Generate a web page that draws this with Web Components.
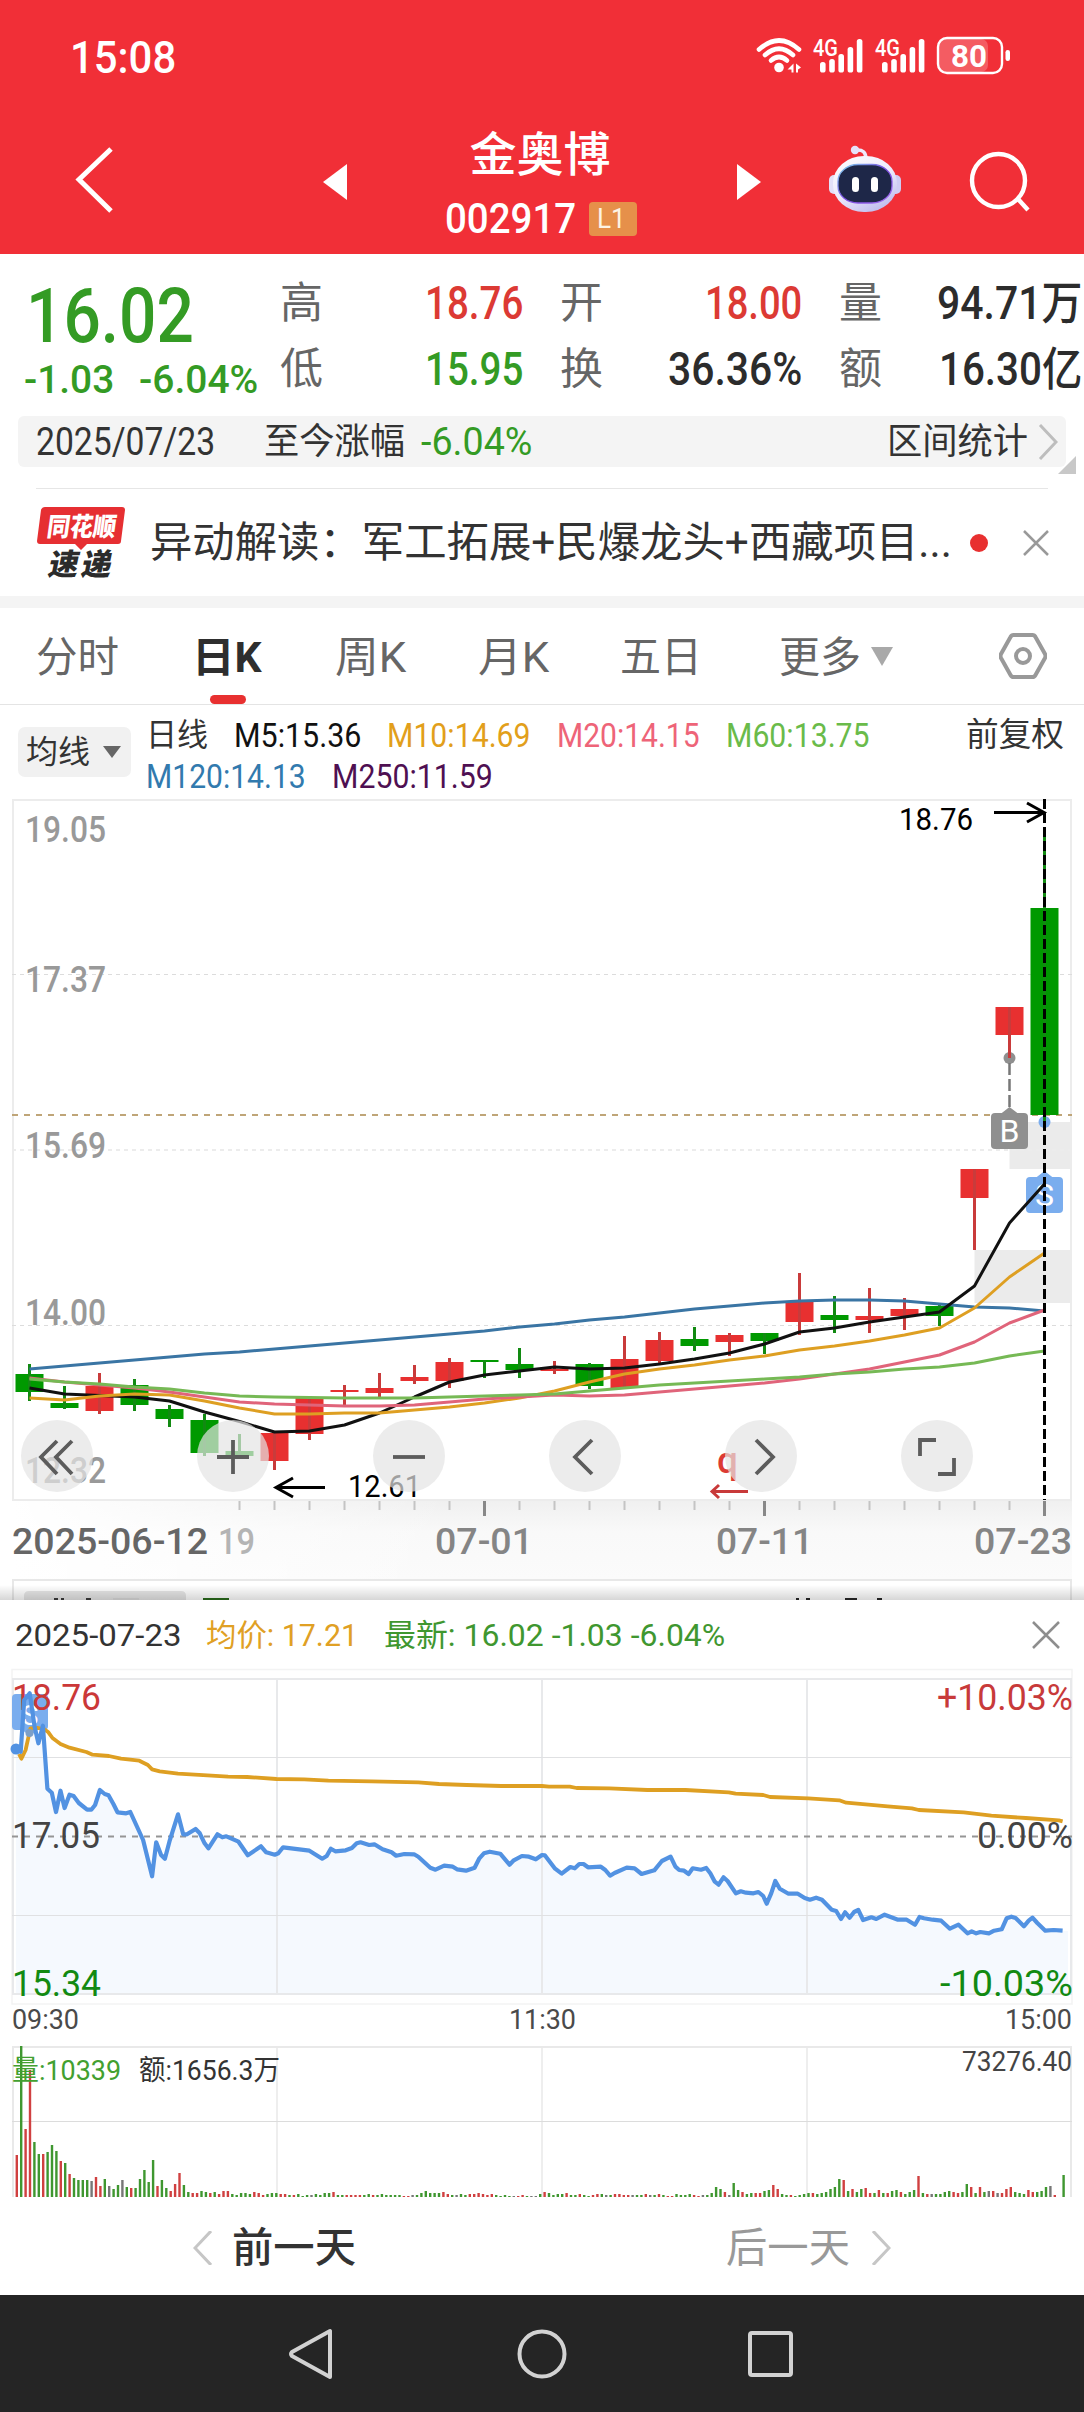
<!DOCTYPE html>
<html lang="zh-CN">
<head>
<meta charset="utf-8">
<title>金奥博 002917</title>
<style>
    body {
        margin: 0;
        width: 1084px;
        background: #fff;
        color: #333;
        font-family: Roboto, "Noto Sans CJK SC", sans-serif;
        --up: #e83030;
        --down: #349b24;
    }
</style>
</head>
<body>
<stock-app></stock-app>

<script>
const NS = 'font-family="Roboto, Noto Sans CJK SC, sans-serif"'

// one line of text squeezed or stretched to an exact width
class FitText extends HTMLElement {
    connectedCallback() {
        const size = this.getAttribute("size")
        const w = Number(this.getAttribute("w"))
        const root = this.attachShadow({ mode: "open" })
        root.innerHTML = `<style>
            :host {
                display: block;
                flex: none;
                width: ${w}px;
                height: ${size}px;
                font-size: ${size}px;
                font-weight: ${this.getAttribute("weight") || 400};
                color: ${this.getAttribute("color") || "inherit"};
                line-height: 1;
                white-space: pre;
            }
            span { display: inline-block; transform-origin: 0 0; }
        </style><span><slot></slot></span>`
        const span = root.querySelector("span")
        const natural = span.offsetWidth
        if (natural > 0) { span.style.transform = `translateX(-1px) scaleX(${w / natural})` }
    }
}

class StatusBar extends HTMLElement {
    connectedCallback() {
        this.attachShadow({ mode: "open" }).innerHTML = this.render()
    }

    renderSignal(x) {
        const bars = [[0, 62], [9.2, 59], [18.4, 54], [27.6, 47], [36.8, 39]]
            .map(([dx, y]) => `<rect x="${x + dx}" y="${y}" width="5.6" height="${72.5 - y}" rx="2.6"/>`)
        return `<text x="${x - 7}" y="56" font-size="24" font-weight="500" textLength="25" lengthAdjust="spacingAndGlyphs" ${NS}>4G</text>${bars.join("")}`
    }

    render() {
        return `<style>
            :host {
                display: flex;
                justify-content: space-between;
                align-items: flex-start;
                height: 114px;
                padding: 35px 71px 0 71px;
                box-sizing: border-box;
                color: #fff;
            }
        </style>
        <fit-text w="106" size="45" weight="500">15:08</fit-text>
        <svg width="258" height="40" viewBox="755 35 258 40" fill="#fff">
            <g fill="none" stroke="#fff" stroke-width="4.6" stroke-linecap="round">
                <path d="M759 49.500Q779 31.500 799 49.500"/>
                <path d="M765 55Q779 42.500 793 55"/>
                <path d="M771 60.500Q779 53.500 787 60.500"/>
            </g>
            <circle cx="779" cy="67.500" r="4.800"/>
            <path d="M793.500 63.500v9h-2v-3h-4zM796 63.500l5 4-3 2v3h-2z"/>
            ${this.renderSignal(820)}
            ${this.renderSignal(882)}
            <rect x="939" y="39" width="49" height="33" rx="7" fill="#fff" fill-opacity=".22"/>
            <rect x="938" y="38" width="64" height="35" rx="9" fill="none" stroke="#fff" stroke-width="2.400"/>
            <rect x="1005.500" y="50" width="4.500" height="11" rx="2.200"/>
            <text x="951" y="67" font-size="32" font-weight="700" textLength="36" lengthAdjust="spacingAndGlyphs" ${NS}>80</text>
        </svg>`
    }
}

class StockHeader extends HTMLElement {
    connectedCallback() {
        this.attachShadow({ mode: "open" }).innerHTML = `<style>
            :host {
                display: grid;
                grid-template-columns: 323px 25px 389px 25px 67px 72px 1fr;
                height: 140px;
                color: #fff;
            }
            svg { display: block; }
            .back { margin: 33px 0 0 74px; }
            .arrow { margin-top: 50px; }
            .name { display: flex; flex-direction: column; align-items: center; padding: 17px 3px 0 0; }
            .code { display: flex; align-items: center; gap: 12px; margin-top: 20px; }
            .level {
                display: flex;
                justify-content: center;
                align-items: center;
                width: 48px;
                height: 34px;
                border-radius: 4px;
                background: #e6904a;
                color: #fdf3e4;
            }
            .robot { grid-column: 6; margin-top: 31px; }
            .search { margin: 36px 0 0 67px; }
        </style>
        <svg class="back" width="42" height="66" viewBox="0 0 42 66" fill="none" stroke="#fff" stroke-width="5"><path d="M37 2 5 32.500 37 64"/></svg>
        <svg class="arrow" width="24" height="36" fill="#fff"><path d="M24 0v36L0 18z"/></svg>
        <div class="name">
            <fit-text w="141" size="47" weight="500"><slot name="name"></slot></fit-text>
            <div class="code">
                <fit-text w="131" size="42" weight="500"><slot name="code"></slot></fit-text>
                <div class="level"><fit-text w="29" size="27">L1</fit-text></div>
            </div>
        </div>
        <svg class="arrow" width="24" height="36" fill="#fff"><path d="M0 0v36l24-18z"/></svg>
        <svg class="robot" width="73" height="68" viewBox="829 145 73 68">
            <defs>
                <linearGradient id="shell" x2=".6" y2="1"><stop offset="0" stop-color="#fff"/><stop offset=".6" stop-color="#ece9fb"/><stop offset="1" stop-color="#c3c0ef"/></linearGradient>
                <linearGradient id="rim" x2="1" y2="1"><stop offset="0" stop-color="#7fd6ee"/><stop offset=".5" stop-color="#7a4be0"/><stop offset="1" stop-color="#a26bf0"/></linearGradient>
            </defs>
            <path d="M856 150q10-1 10 9" fill="none" stroke="#eeeafc" stroke-width="3.500"/>
            <circle cx="855" cy="150" r="4.200" fill="#e6e2fa"/>
            <rect x="829" y="175" width="12" height="19" rx="5" fill="#e3e0f8"/>
            <rect x="889" y="175" width="12" height="19" rx="5" fill="#cfccf3"/>
            <rect x="833" y="156" width="64" height="56" rx="31" ry="27" fill="url(#shell)"/>
            <rect x="838" y="164.500" width="54" height="38.500" rx="20" ry="17" fill="#1e2748" stroke="url(#rim)" stroke-width="1.300"/>
            <rect x="852" y="177" width="7" height="15" rx="3.500" fill="#fff"/>
            <rect x="871" y="177" width="7" height="15" rx="3.500" fill="#fff"/>
        </svg>
        <svg class="search" width="64" height="64" viewBox="968 150 64 64" fill="none" stroke="#fff" stroke-width="4.400"><circle cx="998.500" cy="180.500" r="26.500"/><path d="m1018 199 10 11"/></svg>`
    }
}

class QuotePanel extends HTMLElement {
    connectedCallback() {
        this.attachShadow({ mode: "open" }).innerHTML = this.render()
    }

    render() {
        const red = "#dc3a34"
        const green = "#349b24"
        const cells = [
            ["高", "18.76", 98, red], ["开", "18.00", 97, red], ["量", "94.71万", 145, "#2c2c2c"],
            ["低", "15.95", 98, green], ["换", "36.36%", 134, "#2c2c2c"], ["额", "16.30亿", 143, "#2c2c2c"],
        ].map(([label, value, w, color]) => `<div class="cell">
            <fit-text w="43" size="43" color="#666">${label}</fit-text>
            <fit-text w="${w}" size="46" weight="500" color="${color}">${value}</fit-text>
        </div>`)
        return `<style>
            :host { display: flex; height: 162px; color: #349b24; }
            .price { width: 281px; padding: 24px 0 0 27px; box-sizing: border-box; flex: none; }
            .change { display: flex; gap: 25px; margin: 7px 0 0 -2px; }
            .grid {
                display: grid;
                grid-template-columns: 243px 242px 243px;
                grid-auto-rows: 66px;
                column-gap: 37px;
                padding-top: 16px;
                align-items: center;
            }
            .cell { display: flex; justify-content: space-between; align-items: center; }
        </style>
        <div class="price">
            <fit-text w="168" size="76" weight="500">16.02</fit-text>
            <div class="change">
                <fit-text w="90" size="38" weight="500">-1.03</fit-text>
                <fit-text w="119" size="38" weight="500">-6.04%</fit-text>
            </div>
        </div>
        <div class="grid">${cells.join("")}</div>`
    }
}

class IntervalBar extends HTMLElement {
    connectedCallback() {
        this.attachShadow({ mode: "open" }).innerHTML = `<style>
            :host { display: block; height: 73px; position: relative; }
            .bar {
                display: flex;
                align-items: center;
                height: 51px;
                margin: 0 18px;
                padding: 0 8px 0 19px;
                border-radius: 6px;
                background: #f4f4f4;
            }
            .since { margin: 0 16px 0 49px; }
            .stat { margin-left: auto; }
            .chevron { margin-left: 9px; }
            .corner { position: absolute; left: 1058px; top: 40px; }
            hr { margin: 21px 36px 0; border: 0; border-top: 1px solid #e6e6e6; }
        </style>
        <div class="bar">
            <fit-text w="179" size="38">2025/07/23</fit-text>
            <fit-text class="since" w="141" size="36">至今涨幅</fit-text>
            <fit-text w="111" size="38" color="#349b24">-6.04%</fit-text>
            <fit-text class="stat" w="141" size="36">区间统计</fit-text>
            <svg class="chevron" width="20" height="36" fill="none" stroke="#bdbdbd" stroke-width="3"><path d="m2 1 16 17L2 35"/></svg>
        </div>
        <svg class="corner" width="18" height="18" fill="#c8c8c8"><path d="M18 0v18H0z"/></svg>
        <hr>`
    }
}

class NewsTicker extends HTMLElement {
    connectedCallback() {
        this.attachShadow({ mode: "open" }).innerHTML = `<style>
            :host {
                display: flex;
                align-items: center;
                height: 107px;
                border-bottom: 12px solid #f4f4f4;
            }
            .logo { margin: 0 25px 0 37px; }
            .dot { width: 18px; height: 18px; border-radius: 50%; background: var(--up); margin: 0 35px 0 17px; }
        </style>
        <svg class="logo" width="89" height="76" viewBox="37 504 89 76" ${NS} font-weight="900">
            <path d="M45 506h77q3 0 3 3l-4 31q0 3-3 3H87l-6 6-6-6H40q-3 0-3-3l4-31q1-3 4-3z" fill="#e62f32"/>
            <text transform="translate(46 535) skewX(-8)" font-size="26" fill="#fff" textLength="69" lengthAdjust="spacingAndGlyphs">同花顺</text>
            <text transform="translate(47 574) skewX(-12)" font-size="30" fill="#2b2b2b" textLength="63">速递</text>
        </svg>
        <fit-text w="802" size="42"><slot></slot></fit-text>
        <div class="dot"></div>
        <svg width="26" height="26" fill="none" stroke="#999" stroke-width="2.500"><path d="m1 1 24 24M25 1 1 25"/></svg>`
    }
}

class PeriodTabs extends HTMLElement {
    connectedCallback() {
        const tabs = [
            ["分时", 83], ["日K", 70, true], ["周K", 71], ["月K", 71], ["五日", 82], ["更多", 82],
        ].map(([label, w, active]) => `<div class="tab${active ? " active" : ""}">
            <fit-text w="${w}" size="42" ${active ? 'weight="700"' : ""}>${label}</fit-text>
        </div>`)
        this.attachShadow({ mode: "open" }).innerHTML = `<style>
            :host {
                display: flex;
                height: 96px;
                padding-left: 37px;
                border-bottom: 1px solid #e4e4e4;
                box-sizing: content-box;
                color: #666;
            }
            .tab {
                display: flex;
                flex-direction: column;
                align-items: center;
                padding-top: 29px;
                margin-right: 73px;
            }
            .tab:nth-of-type(3) { margin-right: 72px; }
            .tab:nth-of-type(4) { margin-right: 71px; }
            .tab:nth-of-type(5) { margin-right: 77px; }
            .tab:nth-of-type(6) { margin-right: 9px; }
            .active { color: #2e2e2e; }
            .active::after { content: ""; width: 36px; height: 9px; border-radius: 5px; background: var(--up); margin-top: 16px; }
            .gear { margin: 24px 0 0 106px; }
            .caret { margin-top: 39px; }
        </style>
        ${tabs.join("")}
        <svg class="caret" width="22" height="19" fill="#a9a9a9"><path d="M0 0h22L11 19z"/></svg>
        <svg class="gear" width="48" height="48" viewBox="0 0 48 48" fill="none" stroke="#999" stroke-width="4"><path d="M14.500 3h19q2 0 3 2l9.500 17q1 2 0 4l-9.500 17q-1 2-3 2h-19q-2 0-3-2L2 26q-1-2 0-4l9.500-17q1-2 3-2z"/><circle cx="24" cy="24" r="7"/></svg>`
    }
}

class MaLegend extends HTMLElement {
    connectedCallback() {
        this.attachShadow({ mode: "open" }).innerHTML = `<style>
            :host { display: flex; height: 93px; }
            button {
                display: flex;
                align-items: center;
                gap: 12px;
                width: 113px;
                height: 50px;
                margin: 22px 16px 0 18px;
                padding: 0 0 0 9px;
                border: 0;
                border-radius: 7px;
                background: #f1f1f1;
                font-family: inherit;
                color: #333;
            }
            .rows { display: grid; grid-auto-rows: 41px; padding-top: 9px; align-items: center; align-content: start; }
            .row { display: flex; gap: 26px; align-items: center; }
            .adjust { margin: 13px 19px 0 auto; }
        </style>
        <button><fit-text w="64" size="32">均线</fit-text><svg width="18" height="12" fill="#666"><path d="M0 0h18L9 12z"/></svg></button>
        <div class="rows">
            <div class="row">
                <fit-text w="62" size="32">日线</fit-text>
                <fit-text w="127" size="34" color="#111">M5:15.36</fit-text>
                <fit-text w="144" size="34" color="#e29f1b">M10:14.69</fit-text>
                <fit-text w="143" size="34" color="#ee6478">M20:14.15</fit-text>
                <fit-text w="144" size="34" color="#6abb4a">M60:13.75</fit-text>
            </div>
            <div class="row">
                <fit-text w="160" size="34" color="#327aae">M120:14.13</fit-text>
                <fit-text w="161" size="34" color="#4f1052">M250:11.59</fit-text>
            </div>
        </div>
        <fit-text class="adjust" w="98" size="33">前复权</fit-text>`
    }
}

// [colour, body top, body bottom, high, low] for each trading day
const candles = [
    ["g", 1374, 1392, 1364, 1401], ["g", 1403, 1408, 1386, 1409], ["r", 1386, 1411, 1373, 1414],
    ["g", 1385, 1405, 1379, 1411], ["g", 1409, 1419, 1405, 1427], ["g", 1420, 1453, 1414, 1456],
    ["g", 1451, 1456, 1434, 1458], ["r", 1433, 1461, 1433, 1470], ["r", 1398, 1434, 1398, 1440],
    ["r", 1390, 1392, 1385, 1405], ["r", 1388, 1393, 1373, 1397], ["r", 1377, 1381, 1365, 1384],
    ["r", 1362, 1381, 1358, 1388], ["g", 1360, 1362, 1360, 1378], ["g", 1364, 1370, 1348, 1378],
    ["r", 1369, 1371, 1361, 1374], ["g", 1364, 1386, 1363, 1389], ["r", 1359, 1388, 1336, 1388],
    ["r", 1340, 1361, 1332, 1363], ["g", 1339, 1346, 1327, 1351], ["r", 1335, 1342, 1333, 1356],
    ["g", 1333, 1341, 1333, 1354], ["r", 1301, 1322, 1273, 1335], ["g", 1315, 1320, 1296, 1333],
    ["r", 1316, 1320, 1288, 1333], ["r", 1309, 1316, 1298, 1330], ["g", 1306, 1316, 1304, 1326],
    ["r", 1169, 1198, 1169, 1250], ["r", 1007, 1035, 1007, 1058], ["g", 908, 1115, 835, 1122],
]

const averages = {
    "#3a75a4": [1369, 1366, 1363, 1360, 1357, 1354, 1352, 1349, 1346, 1343, 1340, 1337, 1334, 1331, 1327, 1324, 1320, 1317, 1313, 1309, 1306, 1303, 1301, 1300, 1300, 1301, 1304, 1307, 1308, 1311],
    "#111": [1388, 1394, 1395.5, 1397, 1401, 1412, 1421.5, 1432, 1431, 1425, 1413, 1397, 1382, 1375, 1371, 1367, 1369, 1368, 1364, 1359, 1353, 1344, 1332, 1328, 1322, 1317, 1312, 1286, 1223, 1184],
    "#de9f22": [1398, 1400, 1396, 1394, 1395, 1401, 1408, 1414, 1414, 1413, 1413, 1410, 1407, 1403, 1398, 1391, 1382, 1374, 1369, 1365, 1360, 1356, 1350, 1346, 1341, 1335, 1328, 1308, 1277, 1253],
    "#e0647a": [1378, 1382, 1385, 1388, 1392, 1397, 1402, 1404, 1405, 1406, 1406, 1405, 1402, 1399, 1397, 1395, 1396, 1395, 1392, 1389, 1386, 1383, 1379, 1374, 1369, 1362, 1355, 1342, 1323, 1310],
    "#76b955": [1379, 1382, 1384, 1387, 1389, 1393, 1396, 1397, 1397.5, 1398, 1398, 1398, 1397, 1396, 1395, 1394, 1391, 1388, 1385, 1383, 1381, 1379, 1377, 1374, 1372, 1369, 1367, 1363, 1356, 1351],
}

const label = (x, y, w, size, fill, text, extra = "") =>
    `<text x="${x}" y="${y}" font-size="${size}" fill="${fill}" textLength="${w}" lengthAdjust="spacingAndGlyphs" ${extra}>${text}</text>`

class CandleChart extends HTMLElement {
    connectedCallback() {
        this.attachShadow({ mode: "open" }).innerHTML = this.render()
    }

    x(i) {
        return 29.5 + i * 35
    }

    renderCandle([color, top, bottom, high, low], i) {
        const fill = color === "r" ? "#e83030" : "#009900"
        return `<rect x="${this.x(i) - 14}" y="${top}" width="28" height="${bottom - top}" fill="${fill}"/>
            <rect x="${this.x(i) - 1.5}" y="${high}" width="3" height="${low - high}" fill="${color === "r" ? "#c93b3b" : "#128a12"}"/>`
    }

    renderTick(i) {
        const major = [13, 21, 29].includes(i)
        return `<rect x="${this.x(i) - 1 + (major ? -0.5 : 0)}" y="1501" width="${major ? 3 : 2}" height="${major ? 15 : 9}" fill="${major ? "#888" : "#c4c4c4"}"/>`
    }

    render() {
        const lines = Object.entries(averages)
            .map(([color, ys]) => `<polyline points="${ys.map((y, i) => `${this.x(i)},${y}`).join(" ")}" stroke="${color}"/>`)
        const ticks = candles.map((_, i) => i > 5 ? this.renderTick(i) : "")
        const bold = 'font-weight="500"'
        const icons = [
            '<path d="M36 21 20 37l16 17M51 21 35 37l16 17"/>',
            '<path d="M20 37h32M36 20v34"/>',
            '<path d="M20 37h32"/>',
            '<path d="M43 20 26 37l17 17"/>',
            '<path d="m31 20 17 17-17 17"/>',
            '<path d="M19 36V20h16M53 38v16H37"/>',
        ]
        return `<style>
            :host { display: block; position: relative; height: 802px; }
            svg { display: block; }
            nav { position: absolute; left: 21px; top: 622px; display: flex; gap: 104px; }
            button {
                width: 72px;
                height: 72px;
                padding: 0;
                border: 0;
                border-radius: 50%;
                background: rgba(228, 228, 228, .7);
            }
        </style>
        <svg width="1084" height="802" viewBox="0 798 1084 802" ${NS}>
            <defs>
                <linearGradient id="fade" x2="0" y2="1"><stop offset="0" stop-color="#f0f0f0"/><stop offset=".4" stop-color="#f9f9f9"/><stop offset="1" stop-color="#fbfbfb"/></linearGradient>
                <linearGradient id="left"><stop offset="0" stop-color="#fff"/><stop offset="1" stop-color="#fff" stop-opacity="0"/></linearGradient>
                <linearGradient id="shade" x2="0" y2="1"><stop offset="0" stop-color="#000" stop-opacity="0"/><stop offset="1" stop-color="#000" stop-opacity=".16"/></linearGradient>
            </defs>
            <rect x="12" y="1501" width="1060" height="79" fill="url(#fade)"/>
            <rect x="12" y="1501" width="440" height="79" fill="url(#left)"/>
            <path d="M1009.500 1122H1072v47h-62.500zM974.500 1250H1072v53h-97.500z" fill="#ebebeb"/>
            <rect x="13" y="800" width="1058" height="700" fill="none" stroke="#ececec" stroke-width="2"/>
            <path d="M12 974.500H1072M12 1325.500H1072" stroke="#dcdcdc" stroke-dasharray="4 4"/>
            <path d="M12 1150H1072" stroke="#ececec" stroke-width="2" stroke-dasharray="4 4"/>
            <path d="M12 1115H1072" stroke="#bfa578" stroke-width="2" stroke-dasharray="6 6"/>
            ${[["19.05", 842], ["17.37", 992], ["15.69", 1158], ["14.00", 1325], ["12.32", 1483]].map(([t, y]) => label(25, y, 81, 36, "#999", t, bold)).join("")}

            <g fill="#8f8f8f">
                <circle cx="1009.500" cy="1058" r="6"/>
                <path d="M1009.500 1063V1108" stroke="#777" stroke-width="2.500" stroke-dasharray="12 4"/>
                <path d="m1009.500 1107 9 7h-18z"/>
                <rect x="991" y="1113" width="37" height="36" rx="4"/>
            </g>
            <text x="1009.500" y="1142" font-size="32" fill="#fff" text-anchor="middle">B</text>
            <g fill="#7aadee">
                <circle cx="1044.500" cy="1122" r="6"/>
                <path d="m1044.500 1171 9 7h-18z"/>
                <rect x="1026" y="1177" width="37" height="36" rx="4"/>
            </g>
            <text x="1044.500" y="1206" font-size="32" fill="#fff" text-anchor="middle">S</text>
            ${candles.map((c, i) => this.renderCandle(c, i)).join("")}
            <g fill="none" stroke-width="3" stroke-linejoin="round">${lines.join("")}</g>
            <path d="M1044.500 799V1500" stroke="#000" stroke-width="3" stroke-dasharray="10 4"/>
            <g fill="none" stroke="#000" stroke-width="3">
                <path d="M994 812.500H1043M1027 803l17 9.500-17 9.500"/>
                <path d="M325 1487.500H276M293 1478l-17 9.500 17 9.500"/>
            </g>
            ${label(899, 830, 74, 31, "#000", "18.76")}
            ${label(348, 1497, 73, 31, "#000", "12.61")}
            <text x="717" y="1473" font-size="37" fill="#dc3a34" ${bold}>q</text>
            <path d="M748 1491.500H713M719 1485l-7 6.500 7 6.500" fill="none" stroke="#c83a3a" stroke-width="3"/>

            ${ticks.join("")}
            ${label(12, 1554, 196, 36, "#666", "2025-06-12", bold)}
            ${label(218, 1554, 37, 36, "#b4b4b4", "19", bold)}
            ${label(435, 1554, 98, 36, "#858585", "07-01", bold)}
            ${label(716, 1554, 97, 36, "#858585", "07-11", bold)}
            ${label(974, 1554, 98, 36, "#858585", "07-23", bold)}

            <path d="M13 1600V1580H1071V1600" fill="none" stroke="#e8e8e8" stroke-width="2"/>
            <path d="M24 1600v-4q0-5 5-5h152q5 0 5 5v4z" fill="#e6e6e6"/>
            <rect x="0" y="1585" width="1084" height="15" fill="url(#shade)"/>
            <path d="M54 1599h4M61 1599h3M86 1599h5" stroke="#333" stroke-width="2"/>
            <path d="M113 1599h26" stroke="#bbb" stroke-width="2"/>
            <path d="M203 1599h26" stroke="#245c18" stroke-width="2"/>
            <path d="M796 1599h3M806 1599h4M845 1599h12M877 1599h5" stroke="#222" stroke-width="2"/>
        </svg>
        <nav>${icons.map(d => `<button><svg width="72" height="72" fill="none" stroke="#5c5c5c" stroke-width="3.800">${d}</svg></button>`).join("")}</nav>`
    }
}

// samples are read in a 2.893 x 3 grid; the second half starts at the lunch break
const priceMorning = "46,447 60,455 70,300 86,280 100,380 111,430 124,377 137,566 150,578 162,636 175,572 187,624 201,584 213,588 228,609 252,629 264,629 275,615 289,570 303,582 314,586 328,612 340,637 365,640 377,636 402,693 414,720 440,829 452,727 466,765 477,776 490,725 515,643 530,703 541,703 566,687 578,700 592,730 603,745 629,703 643,712 655,709 690,725 717,766 755,739 770,757 795,764 805,760 819,742 895,752 932,776 945,768 957,746 970,754 1000,751 1018,744 1032,730 1043,727 1068,735 1083,733 1107,748 1133,757 1146,767 1170,762 1198,763 1210,770 1245,803 1260,809 1285,797 1310,800 1322,808 1348,812 1373,803 1387,775 1400,760 1417,755 1447,761 1474,794 1485,782 1510,768 1530,770 1550,778 1568,765"
const priceAfternoon = "8,766 38,806 57,821 82,801 95,805 108,792 120,792 133,802 170,800 183,810 197,827 210,819 245,803 268,805 288,822 325,811 347,783 372,770 386,800 397,810 411,812 424,822 436,805 460,809 475,804 487,820 500,845 511,854 525,832 537,843 561,880 575,874 590,878 612,880 626,876 640,888 650,911 663,880 675,843 688,866 713,881 740,881 760,894 775,899 793,893 810,899 838,929 851,933 865,957 877,937 890,953 903,936 915,930 929,960 953,952 967,957 991,944 1030,959 1055,959 1079,974 1092,951 1105,955 1130,959 1155,962 1180,986 1205,974 1231,1000 1243,994 1256,1000 1268,996 1293,1000 1308,992 1330,988 1344,955 1358,950 1370,954 1394,979 1408,962 1419,953 1433,969 1456,992 1480,990 1506,992"
const averageMorning = "55,462 62,476 74,450 88,385 110,384 127,387 140,397 152,414 175,432 201,443 250,456 268,464 315,468 350,476 403,482 428,495 440,508 462,514 515,521 600,526 660,530 715,531 800,537 880,538 950,542 1075,544 1210,547 1270,552 1350,555 1450,558 1568,558"
const averageAfternoon = "20,560 80,560 100,564 195,565 305,570 415,570 540,577 560,581 640,585 660,591 770,595 860,601 880,608 1000,619 1070,625 1090,630 1220,637 1300,647 1400,654 1495,661 1506,664"

const toPoints = (samples, left) =>
    samples.split(" ").map(pair => {
        const [x, y] = pair.split(",").map(Number)
        return `${(left + x / 2.893).toFixed(1)},${(1600 + y / 3).toFixed(1)}`
    }).join(" ")

// traded volume per minute: colour and bar height
const volumes = `r42 g151 r68 r127 g55 g43 r43 g45 g52 g46 r36 g34 r23 g19 g17 g17 g17 k16 r20 r11 g18 k11 g8 g12 k17 g10 r9 g9 g18 g27
g15 g37 r11 g17 g9 r6 r13 r24 g12 g5 r4 r4 g6 g5 r4 g5 r3 r6 r6 g3 g2 g4 g4 g3 r5 r4 r2 g3 g4 g4
r3 r3 g2 r2 g3 g1 g2 k2 g3 g2 g4 g4 r5 g2 g2 r2 r2 r2 r2 g2 g3 r2 g2 g3 g2 g2 g2 g2 r1 r1 k2 g2 g4 g6
g4 g4 g4 r5 r3 g2 k2 g3 g2 r3 r3 r4 r3 r2 r3 g2 g1 g2 g1 k1 r1 r2 g1 k1 k1 g3 r5 g4 g2 g3 g3 r4 g2 g2 r3 g2
g1 r2 r3 g3 k2 g2 r3 r3 r2 r2 k2 g2 g2 r3 k2 g2 r3 g2 r1 r1 g3 g2 g2 g3 r2 r1 k2 g2 g4
g10 g8 r5 k2 g14 g7 r5 g3 g4 r4 r4 g6 g7 r12 r8 g3 g2 r2 g1 g2 g3 g4 r4 g3 g4 g5 g8 g10 g18 r17 g6 r8 g5 g8 r9 r4 g4 r7 g4 r4
g6 g7 r5 g3 g5 g7 r21 g4 r3 k3 g3 g3 g5 g6 r5 r4 g5 g13 r10 g4 r10 g5 k6 r6 k4 r4 r8 r10 g5 g4 g3 r7 r5 g5 g6 g10 k11 r2 g0 g22`.split(/\s+/)

class MinuteChart extends HTMLElement {
    connectedCallback() {
        this.attachShadow({ mode: "open" }).innerHTML = this.render()
    }

    renderVolume(bar, i) {
        const h = Number(bar.slice(1))
        const fill = { r: "#d04040", g: "#3f9730", k: "#777" }[bar[0]]
        const step = 1046.800 / (volumes.length - 1)
        return `<rect x="${(15.6 + i * step).toFixed(1)}" y="${2197 - h}" width="2.400" height="${h}" fill="${fill}"/>`
    }

    render() {
        const price = `${toPoints(priceMorning, 0)} ${toPoints(priceAfternoon, 542)}`
        const average = `${toPoints(averageMorning, 0)} ${toPoints(averageAfternoon, 542)}`
        return `<style>
            :host { display: block; height: 534px; }
            svg { display: block; }
        </style>
        <svg width="1084" height="534" viewBox="0 1668 1084 534" ${NS}>
            <rect x="12" y="1669.500" width="1060" height="334.500" fill="none" stroke="#f3f3f3" stroke-width="1.500"/>
            <polygon points="15.900,1995 ${price} 1068,1931 1068,1995" fill="#f5f9fe"/>
            <g fill="none" stroke="#e8e9eb" stroke-width="2">
                <rect x="13" y="1679" width="1058" height="315"/>
                <path d="M277 1679V1995M542 1679V1995M807 1679V1995"/>
                <path d="M12 1757.500H1072M12 1915.500H1072" stroke="#e0e1e3" stroke-width="1"/>
                <path d="M12 1836.500H1072" stroke="#959595" stroke-dasharray="6 6"/>
            </g>
            <rect x="12" y="1694" width="36" height="36" rx="4" fill="#7aadee"/>
            <path d="m21 1729 9 7 9-7z" fill="#7aadee"/>
            <text x="30" y="1725" font-size="28" fill="#fff" text-anchor="middle">S</text>
            <polyline points="${average}" fill="none" stroke="#de9f22" stroke-width="3.800" stroke-linejoin="round"/>
            <circle cx="16" cy="1749" r="5.500" fill="#5292e2"/>
            <circle cx="29.500" cy="1733" r="4" fill="#7c9fc8"/>
            ${label(12, 1710, 89, 36, "#cb3838", "18.76")}
            <polyline points="${price}" fill="none" stroke="#5292e2" stroke-width="4.200" stroke-linejoin="round"/>
            ${label(12, 1848, 88, 36, "#444", "17.05")}
            ${label(12, 1996, 89, 36, "#128a12", "15.34")}
            ${label(937, 1710, 136, 36, "#c83a3a", "+10.03%")}
            ${label(977, 1848, 96, 36, "#444", "0.00%")}
            ${label(940, 1996, 133, 36, "#128a12", "-10.03%")}
            ${label(12, 2029, 67, 28, "#4a4a4a", "09:30")}
            ${label(509, 2029, 67, 28, "#4a4a4a", "11:30")}
            ${label(1005, 2029, 67, 28, "#4a4a4a", "15:00")}

            <g fill="none" stroke="#e9e9e9" stroke-width="2">
                <path d="M13 2197V2047H1071V2197"/>
                <path d="M277 2047V2197M542 2047V2197M807 2047V2197" stroke-width="1.500"/>
                <path d="M12 2121.500H1072" stroke="#dcdcdc" stroke-width="1"/>
            </g>
            ${volumes.map((bar, i) => this.renderVolume(bar, i)).join("")}
            ${label(12, 2080, 109, 28, "#42a030", "量:10339")}
            ${label(139, 2080, 141, 28, "#333", "额:1656.3万")}
            ${label(962, 2071, 110, 28, "#444", "73276.40")}
        </svg>`
    }
}

class DaySheet extends HTMLElement {
    connectedCallback() {
        this.attachShadow({ mode: "open" }).innerHTML = `<style>
            :host { display: block; height: 695px; background: #fff; }
            header { display: flex; align-items: center; height: 68px; padding: 2px 24px 0 16px; box-sizing: border-box; }
            .average { margin: 0 26px 0 24px; }
            .close { margin-left: auto; }
            footer { display: flex; justify-content: space-between; align-items: center; height: 93px; padding: 0 193px 1px; box-sizing: border-box; }
            footer div { display: flex; align-items: center; gap: 21px; }
        </style>
        <header>
            <fit-text w="167" size="31">2025-07-23</fit-text>
            <fit-text class="average" w="152" size="31" color="#e0a024">均价: 17.21</fit-text>
            <fit-text w="341" size="31" color="#3f9730">最新: 16.02 -1.03 -6.04%</fit-text>
            <svg class="close" width="28" height="28" fill="none" stroke="#8e8e8e" stroke-width="2.500"><path d="m1 1 26 26M27 1 1 27"/></svg>
        </header>
        <minute-chart></minute-chart>
        <footer>
            <div>
                <svg width="19" height="34" fill="none" stroke="#c6c6c6" stroke-width="3"><path d="M18 0 2 17l16 17"/></svg>
                <fit-text w="124" size="41" weight="500">前一天</fit-text>
            </div>
            <div>
                <fit-text w="124" size="41" color="#999">后一天</fit-text>
                <svg width="19" height="34" fill="none" stroke="#c6c6c6" stroke-width="3"><path d="m1 0 16 17L1 34"/></svg>
            </div>
        </footer>`
    }
}

class SystemNav extends HTMLElement {
    connectedCallback() {
        this.attachShadow({ mode: "open" }).innerHTML = `<style>
            :host { display: flex; justify-content: space-between; align-items: center; height: 117px; padding: 0 288px 0 287px; box-sizing: border-box; background: #252525; }
        </style>
        <svg width="50" height="54" fill="none" stroke="#d2d2d2" stroke-width="4" stroke-linejoin="round"><path d="M43 4v46L5 29q-2-2 0-4z"/></svg>
        <svg width="54" height="54" fill="none" stroke="#d2d2d2" stroke-width="4"><circle cx="27" cy="27" r="22.500"/></svg>
        <svg width="50" height="54" fill="none" stroke="#d2d2d2" stroke-width="4"><rect x="4" y="6" width="41" height="42" rx="2"/></svg>`
    }
}

class StockApp extends HTMLElement {
    connectedCallback() {
        this.attachShadow({ mode: "open" }).innerHTML = `<style>
            :host { display: block; width: 1084px; height: 2412px; overflow: hidden; }
            .top { background: #f12f37; }
        </style>
        <div class="top">
            <status-bar></status-bar>
            <stock-header><span slot="name">金奥博</span><span slot="code">002917</span></stock-header>
        </div>
        <quote-panel></quote-panel>
        <interval-bar></interval-bar>
        <news-ticker>异动解读：军工拓展+民爆龙头+西藏项目...</news-ticker>
        <period-tabs></period-tabs>
        <ma-legend></ma-legend>
        <candle-chart></candle-chart>
        <day-sheet></day-sheet>
        <system-nav></system-nav>`
    }
}

customElements.define("fit-text", FitText)
customElements.define("status-bar", StatusBar)
customElements.define("stock-header", StockHeader)
customElements.define("quote-panel", QuotePanel)
customElements.define("interval-bar", IntervalBar)
customElements.define("news-ticker", NewsTicker)
customElements.define("period-tabs", PeriodTabs)
customElements.define("ma-legend", MaLegend)
customElements.define("candle-chart", CandleChart)
customElements.define("minute-chart", MinuteChart)
customElements.define("day-sheet", DaySheet)
customElements.define("system-nav", SystemNav)
customElements.define("stock-app", StockApp)
</script>
</body>
</html>
